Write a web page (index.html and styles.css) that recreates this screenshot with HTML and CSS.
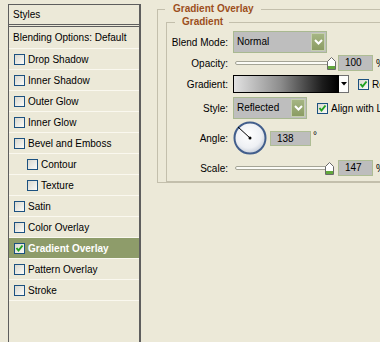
FILE: index.html
```html
<!DOCTYPE html>
<html lang="en">
<head>
    <meta charset="UTF-8">
    <meta name="viewport" content="width=device-width, initial-scale=1.0">
    <title>Layer Style</title>
    <link rel="stylesheet" href="styles.css">
</head>
<body>
    <div class="styles-panel">
        <div class="panel-title">Styles</div>
        <div class="style-item blending">Blending Options: Default</div>
        <div class="style-item"><span class="check"></span>Drop Shadow</div>
        <div class="style-item"><span class="check"></span>Inner Shadow</div>
        <div class="style-item"><span class="check"></span>Outer Glow</div>
        <div class="style-item"><span class="check"></span>Inner Glow</div>
        <div class="style-item"><span class="check"></span>Bevel and Emboss</div>
        <div class="style-item sub"><span class="check"></span>Contour</div>
        <div class="style-item sub"><span class="check"></span>Texture</div>
        <div class="style-item"><span class="check"></span>Satin</div>
        <div class="style-item"><span class="check"></span>Color Overlay</div>
        <div class="style-item active">
            <span class="check"><svg width="9" height="9" viewBox="0 0 9 9"><path d="M1.5 4 L3.5 6.5 L7.5 1.5" fill="none" stroke="#21a121" stroke-width="2"/></svg></span>Gradient Overlay
        </div>
        <div class="style-item"><span class="check"></span>Pattern Overlay</div>
        <div class="style-item"><span class="check"></span>Stroke</div>
    </div>

    <div class="options">
        <fieldset class="group">
            <legend>Gradient Overlay</legend>
            <div class="group-body">
                <fieldset class="group inner">
                    <legend>Gradient</legend>
                    <div class="form">
                        <div class="row row-blend">
                            <span class="label">Blend Mode:</span>
                            <div class="select blend-select">
                                <span class="select-text">Normal</span>
                                <span class="select-btn"><svg width="9" height="6" viewBox="0 0 9 6"><path d="M1 1 L4.5 4.5 L8 1" fill="none" stroke="#fff" stroke-width="2"/></svg></span>
                            </div>
                        </div>
                        <div class="row row-opacity">
                            <span class="label">Opacity:</span>
                            <div class="slider">
                                <div class="slider-track"></div>
                                <svg class="slider-thumb" style="left: 94px" width="9" height="13" viewBox="0 0 9 13"><path d="M0.5 4.5 L4.5 0.5 L8.5 4.5 L8.5 12.5 L0.5 12.5 Z" fill="#fff" stroke="#6a6a6a"/><rect x="1" y="9" width="7" height="3" fill="#62a83c"/></svg>
                            </div>
                            <span class="num">100</span>
                            <span class="unit">%</span>
                        </div>
                        <div class="row row-gradient">
                            <span class="label">Gradient:</span>
                            <div class="gradient-preview"></div>
                            <span class="gradient-arrow"><svg width="6" height="4" viewBox="0 0 6 4"><path d="M0 0 L6 0 L3 3.5 Z" fill="#000"/></svg></span>
                            <span class="option reverse"><span class="check"><svg width="9" height="9" viewBox="0 0 9 9"><path d="M1.5 4 L3.5 6.5 L7.5 1.5" fill="none" stroke="#21a121" stroke-width="2"/></svg></span>Reverse</span>
                        </div>
                        <div class="row row-style">
                            <span class="label">Style:</span>
                            <div class="select style-select">
                                <span class="select-text">Reflected</span>
                                <span class="select-btn"><svg width="9" height="6" viewBox="0 0 9 6"><path d="M1 1 L4.5 4.5 L8 1" fill="none" stroke="#fff" stroke-width="2"/></svg></span>
                            </div>
                            <span class="option align"><span class="check"><svg width="9" height="9" viewBox="0 0 9 9"><path d="M1.5 4 L3.5 6.5 L7.5 1.5" fill="none" stroke="#21a121" stroke-width="2"/></svg></span>Align with Layer</span>
                        </div>
                        <div class="row row-angle">
                            <span class="label">Angle:</span>
                            <svg class="dial" width="34" height="34" viewBox="0 0 34 34">
                                <defs>
                                    <radialGradient id="dialFill" cx="0.45" cy="0.4" r="0.6">
                                        <stop offset="0" stop-color="#ffffff"/>
                                        <stop offset="0.7" stop-color="#eef0f4"/>
                                        <stop offset="1" stop-color="#c8cfda"/>
                                    </radialGradient>
                                </defs>
                                <circle cx="17" cy="17" r="15.5" fill="url(#dialFill)" stroke="#425e8c" stroke-width="2"/>
                                <line x1="17" y1="17" x2="5" y2="6" stroke="#000" stroke-width="1"/>
                                <circle cx="17" cy="17" r="1.5" fill="#000"/>
                            </svg>
                            <span class="num angle-num">138</span>
                            <span class="degree">°</span>
                        </div>
                        <div class="row row-scale">
                            <span class="label">Scale:</span>
                            <div class="slider">
                                <div class="slider-track"></div>
                                <svg class="slider-thumb" style="left: 92px" width="9" height="13" viewBox="0 0 9 13"><path d="M0.5 4.5 L4.5 0.5 L8.5 4.5 L8.5 12.5 L0.5 12.5 Z" fill="#fff" stroke="#6a6a6a"/><rect x="1" y="9" width="7" height="3" fill="#62a83c"/></svg>
                            </div>
                            <span class="num">147</span>
                            <span class="unit">%</span>
                        </div>
                    </div>
                </fieldset>
            </div>
        </fieldset>
    </div>
</body>
</html>
```

FILE: styles.css
```css
body {
    margin: 0;
    width: 380px;
    height: 342px;
    overflow: hidden;
    background-color: #ece9d8;
    font-family: "Liberation Sans", Arial, sans-serif;
    font-size: 10px;
    color: #000;
    display: flex;
    align-items: flex-start;
}

/* left list of styles */
.styles-panel {
    flex-shrink: 0;
    margin: 4px 0 0 8px;
    width: 130px;
    height: 360px;
    border: 1px solid #5e5e5e;
    border-right-width: 2px;
}
.panel-title {
    height: 19px;
    line-height: 19px;
    padding-left: 4px;
    border-bottom: 3px double #5e5e5e;
}
.style-item {
    display: flex;
    align-items: center;
    height: 20px;
    padding-left: 5px;
    border-bottom: 1px solid #faf8ef;
    white-space: nowrap;
}
.style-item.blending {
    height: 21px;
    padding-left: 4px;
}
.style-item.sub {
    padding-left: 18px;
}
.style-item.active {
    background-color: #8e9c6a;
    color: #fff;
    font-weight: bold;
}

.check {
    flex-shrink: 0;
    width: 9px;
    height: 9px;
    margin-right: 3px;
    border: 1px solid #1c5180;
    background: linear-gradient(135deg, #d9d8cf, #fbfbf8);
    display: flex;
    align-items: center;
    justify-content: center;
}

/* right side options */
.options {
    flex-shrink: 0;
    margin: 3px 0 0 16px;
}
.group {
    margin: 0;
    padding: 0;
    min-width: 0;
    width: 260px;
    border: 1px solid #c3bfac;
}
.group legend {
    margin-left: 7px;
    padding: 0 7px 0 8px;
    line-height: 12px;
    font-weight: bold;
    color: #9c4f1c;
}
.group-body {
    padding: 1px 0 0 8px;
}
.group.inner {
    width: 240px;
}
.group.inner legend {
    margin-left: 8px;
    padding: 0 6px 0 7px;
}
.form {
    padding-bottom: 5px;
}

.row {
    display: flex;
    align-items: center;
    white-space: nowrap;
}
.label {
    flex-shrink: 0;
    width: 61px;
    margin-right: 5px;
    text-align: right;
}
.row-blend { margin-top: 3px; height: 22px; }
.row-opacity { margin-top: 2px; height: 16px; }
.row-gradient { margin-top: 4px; height: 18px; }
.row-style { margin-top: 4px; height: 22px; }
.row-angle { margin-top: 2px; height: 34px; }
.row-scale { margin-top: 5px; height: 16px; }

.select {
    flex-shrink: 0;
    display: flex;
    height: 22px;
    box-sizing: border-box;
    padding: 1px;
    border: 1px solid #a9b991;
    background-color: #bebebe;
}
.blend-select { width: 94px; }
.style-select { width: 74px; }
.select-text {
    flex: 1;
    line-height: 18px;
    padding-left: 2px;
}
.select-btn {
    width: 14px;
    box-sizing: border-box;
    border: 1px solid #c4cfae;
    background: linear-gradient(#a5b583, #8b9c63);
    display: flex;
    align-items: center;
    justify-content: center;
}

.slider {
    flex-shrink: 0;
    position: relative;
    width: 102px;
    height: 16px;
}
.slider-track {
    margin: 6px 6px 0 2px;
    height: 2px;
    border: 1px solid #a4a496;
    border-radius: 3px;
    background-color: #fbfbf6;
}
.slider-thumb {
    position: absolute;
    top: 2px;
}

.num {
    flex-shrink: 0;
    width: 35px;
    height: 16px;
    box-sizing: border-box;
    margin-left: 3px;
    padding-left: 6px;
    line-height: 14px;
    border: 1px solid #aebd94;
    background-color: #bdbdbd;
}
.unit {
    margin-left: 3px;
}

.gradient-preview {
    flex-shrink: 0;
    width: 106px;
    height: 18px;
    box-sizing: border-box;
    border: 1px solid #000;
    background: linear-gradient(to right, #e2e2e2, #8c8c8c 45%, #1c1c1c 85%, #000);
}
.gradient-arrow {
    flex-shrink: 0;
    width: 10px;
    height: 18px;
    box-sizing: border-box;
    border: 1px solid #707070;
    border-left: none;
    background-color: #fdfdfb;
    display: flex;
    align-items: center;
    justify-content: center;
}
.option {
    display: flex;
    align-items: center;
}
.reverse { margin-left: 9px; }
.align { margin-left: 10px; }

.dial {
    flex-shrink: 0;
}
.angle-num {
    width: 41px;
    height: 15px;
    margin-left: 3px;
    line-height: 13px;
}
.degree {
    margin-left: 2px;
    align-self: flex-start;
    margin-top: 9px;
}
```
